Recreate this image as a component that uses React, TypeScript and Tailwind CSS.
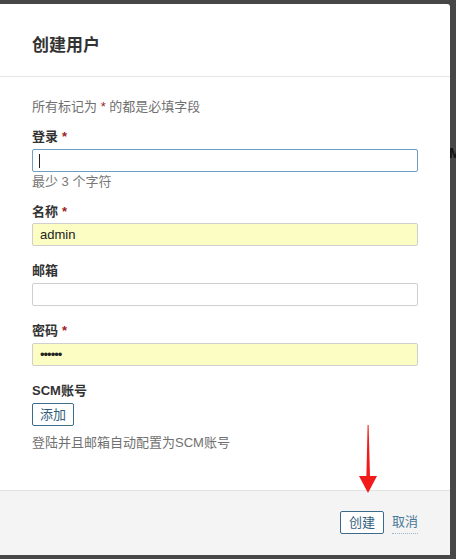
const font = "font-['Liberation_Sans','Noto_Sans_CJK_SC',sans-serif]"

function Label({ text, required }: { text: string; required?: boolean }) {
  return (
    <div className="h-[18px] leading-[18px] text-[13px] font-bold text-[#333]">
      {text}
      {required && <span className="ml-1 text-[#a01d1d]">*</span>}
    </div>
  )
}

export default function App() {
  return (
    <div className={`relative h-[559px] w-[456px] overflow-hidden bg-[#474747] pt-[4px] ${font}`}>
      {/* page behind the dialog */}
      <span className="absolute left-[449px] top-[143px] text-[14px] font-bold text-[#111]">M</span>

      {/* Dialog */}
      <div className="relative z-10 flex h-[551px] w-[450px] flex-col rounded-tr-[3px] bg-white">
        {/* Header */}
        <div className="flex h-[73px] shrink-0 items-center border-b border-[#e5e5e5] px-8 pt-[11px]">
          <h2 className="text-[17px] font-semibold text-[#333]">创建用户</h2>
        </div>

        {/* Body */}
        <div className="flex-1 px-8 pt-[21px] text-[13px]">
          <p className="h-[18px] leading-[18px] text-[#707070]">
            所有标记为 <span className="text-[#a01d1d]">*</span> 的都是必填字段
          </p>

          <div className="mt-[12px]">
            <Label text="登录" required />
            <div className="mt-[3px] flex h-[23px] items-center rounded-[2px] border border-[#6e9ec4] bg-white px-[6px]">
              <span className="h-[14px] w-px bg-[#222]" />
            </div>
            <div className="mt-[1px] h-[17px] leading-[17px] text-[#777]">最少 3 个字符</div>
          </div>

          <div className="mt-[13px]">
            <Label text="名称" required />
            <div className="mt-[2px] flex h-[23px] items-center rounded-[2px] border border-[#cfcfcf] bg-[#fbfdc2] px-[7px] text-[13px] text-[#222]">
              admin
            </div>
          </div>

          <div className="mt-[16px]">
            <Label text="邮箱" />
            <div className="mt-[3px] h-[23px] rounded-[2px] border border-[#cfcfcf] bg-white" />
          </div>

          <div className="mt-[16px]">
            <Label text="密码" required />
            <div className="mt-[3px] flex h-[23px] items-center rounded-[2px] border border-[#cfcfcf] bg-[#fbfdc2] px-[7px] text-[13px] tracking-[-1px] text-[#222]">
              ••••••
            </div>
          </div>

          <div className="mt-[16px]">
            <Label text="SCM账号" />
            <button className="mt-[3px] flex h-[23px] items-center rounded-[2px] border border-[#3d6b8c] bg-white px-[7px] text-[13px] text-[#335d7c]">
              添加
            </button>
            <p className="mt-[8px] h-[18px] leading-[18px] text-[#707070]">登陆并且邮箱自动配置为SCM账号</p>
          </div>
        </div>

        {/* Footer */}
        <div className="flex h-[65px] shrink-0 items-start justify-end gap-[8px] border-t border-[#e2e2e2] bg-[#f4f4f4] px-8 pt-[20px]">
          <button className="flex h-[23px] items-center rounded-[2px] border border-[#3d6b8c] bg-white px-[8px] text-[13px] text-[#335d7c]">
            创建
          </button>
          <button className="flex h-[23px] items-center border-b border-dotted border-[#9bb6c9] text-[13px] text-[#4a7898]">
            取消
          </button>
        </div>
      </div>

      {/* Annotation arrow */}
      <svg className="absolute left-0 top-0 z-20" width="456" height="559" viewBox="0 0 456 559">
        <polygon points="367.6,425 368.6,425 370,476 377,476 368,493 359,476 366.4,476" fill="#f21b1b" />
      </svg>
    </div>
  )
}
